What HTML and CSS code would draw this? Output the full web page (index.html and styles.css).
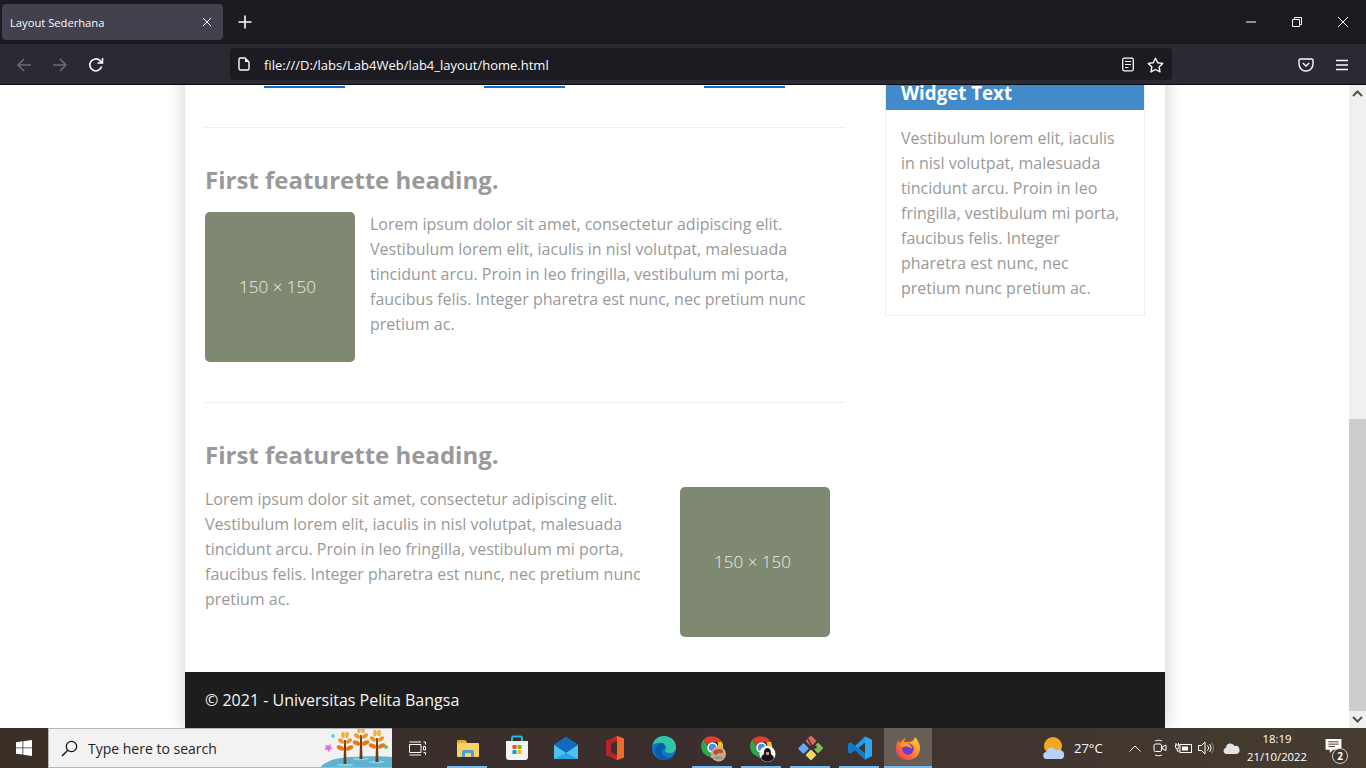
FILE: index.html
```html
<!DOCTYPE html>
<html lang="en-US">

<head>
    <meta charset="utf-8">
    <title>Layout Sederhana</title>
    <link rel="stylesheet" href="styles.css">
</head>

<body>
    <!-- Browser tabs -->
    <header class="tabbar">
        <div class="tab">
            <span class="tab-title">Layout Sederhana</span>
            <svg class="tab-close" width="10" height="10" viewBox="0 0 10 10"><path d="M1 1l8 8M9 1l-8 8" stroke="#fbfbfe" stroke-width="1"/></svg>
        </div>
        <svg class="tab-new" width="14" height="14" viewBox="0 0 14 14"><path d="M7 .5v13M.5 7h13" stroke="#fbfbfe" stroke-width="1.6"/></svg>
        <div class="win-buttons">
            <svg width="46" height="12" viewBox="0 0 46 12"><path d="M18 6h10" stroke="#fff" stroke-width="1"/></svg>
            <svg width="46" height="12" viewBox="0 0 46 12"><path d="M18.5 3.500h7v7h-7zM20.500 3.500v-2h7v7h-2" fill="none" stroke="#fff" stroke-width="1"/></svg>
            <svg width="46" height="12" viewBox="0 0 46 12"><path d="M18 1l10 10M28 1l-10 10" stroke="#fff" stroke-width="1"/></svg>
        </div>
    </header>

    <!-- Browser toolbar -->
    <nav class="toolbar">
        <svg class="nav-icon" width="16" height="16" viewBox="0 0 16 16"><path d="M15 8H2M8 2L2 8l6 6" fill="none" stroke="#6c6b73" stroke-width="1.5"/></svg>
        <svg class="nav-icon" width="16" height="16" viewBox="0 0 16 16"><path d="M1 8h13M8 2l6 6-6 6" fill="none" stroke="#6c6b73" stroke-width="1.5"/></svg>
        <svg class="nav-icon" width="16" height="16" viewBox="0 0 16 16"><path d="M13.600 9.500A6 6 0 1 1 12 3.600L14 5.600M14.500 1v5h-5" fill="none" stroke="#fbfbfe" stroke-width="1.6"/></svg>
        <div class="urlbar">
            <svg class="url-page" width="12" height="14" viewBox="0 0 12 14"><path d="M1 2.500A1.500 1.500 0 0 1 2.500 1H7l4 4v6.500A1.500 1.500 0 0 1 9.500 13h-7A1.500 1.500 0 0 1 1 11.500z" fill="none" stroke="#fbfbfe" stroke-width="1.4"/><path d="M7 1v4h4z" fill="#fbfbfe"/></svg>
            <span class="url-text">file:///D:/labs/Lab4Web/lab4_layout/home.html</span>
            <svg class="url-reader" width="14" height="15" viewBox="0 0 14 15"><rect x="1.700" y="1.200" width="10.600" height="12.600" rx="1.500" fill="none" stroke="#fbfbfe" stroke-width="1.300"/><path d="M4 4.500h6M4 7.500h6M4 10.500h3.500" stroke="#fbfbfe" stroke-width="1.200"/></svg>
            <svg class="url-star" width="17" height="16" viewBox="0 0 17 16"><path d="M8.500 1.200l2.200 4.500 5 .7-3.600 3.500.9 5-4.500-2.400-4.500 2.400.9-5L1.300 6.400l5-.7z" fill="none" stroke="#fbfbfe" stroke-width="1.400" stroke-linejoin="round"/></svg>
        </div>
        <svg class="pocket" width="16" height="14" viewBox="0 0 16 14"><path d="M1 2.500A1.500 1.500 0 0 1 2.500 1h11A1.500 1.500 0 0 1 15 2.500V6a7 7 0 0 1-14 0z" fill="none" stroke="#fbfbfe" stroke-width="1.400"/><path d="M4.800 5L8 8l3.200-3" fill="none" stroke="#fbfbfe" stroke-width="1.400"/></svg>
        <svg class="menu" width="14" height="12" viewBox="0 0 14 12"><path d="M1 1.500h12M1 6h12M1 10.500h12" stroke="#fbfbfe" stroke-width="1.300"/></svg>
    </nav>

    <div class="viewport">
        <div class="pagearea">
            <div class="page">
                <div class="content">
                    <main class="main">
                        <div class="links">
                            <div class="link-col"><a href="#" aria-label="Read More"></a></div>
                            <div class="link-col"><a href="#" aria-label="Read More"></a></div>
                            <div class="link-col"><a href="#" aria-label="Read More"></a></div>
                        </div>
                        <hr class="divider first">
                        <article class="featurette">
                            <h2>First featurette heading.</h2>
                            <div class="feature-row">
                                <div class="thumb">150 × 150</div>
                                <p class="feature-text left">Lorem ipsum dolor sit amet, consectetur adipiscing elit. Vestibulum lorem elit, iaculis in nisl volutpat, malesuada tincidunt arcu. Proin in leo fringilla, vestibulum mi porta, faucibus felis. Integer pharetra est nunc, nec pretium nunc pretium ac.</p>
                            </div>
                        </article>
                        <hr class="divider">
                        <article class="featurette last">
                            <h2>First featurette heading.</h2>
                            <div class="feature-row">
                                <p class="feature-text right">Lorem ipsum dolor sit amet, consectetur adipiscing elit. Vestibulum lorem elit, iaculis in nisl volutpat, malesuada tincidunt arcu. Proin in leo fringilla, vestibulum mi porta, faucibus felis. Integer pharetra est nunc, nec pretium nunc pretium ac.</p>
                                <div class="thumb">150 × 150</div>
                            </div>
                        </article>
                    </main>
                    <aside class="widget">
                        <h3>Widget Text</h3>
                        <p>Vestibulum lorem elit, iaculis in nisl volutpat, malesuada tincidunt arcu. Proin in leo fringilla, vestibulum mi porta, faucibus felis. Integer pharetra est nunc, nec pretium nunc pretium ac.</p>
                    </aside>
                </div>
                <footer class="footer">© 2021 - Universitas Pelita Bangsa</footer>
            </div>
        </div>
        <div class="scrollbar">
            <div class="scroll-btn"><svg width="11" height="7" viewBox="0 0 11 7"><path d="M1 6l4.500-4.500L10 6" fill="none" stroke="#505050" stroke-width="2"/></svg></div>
            <div class="scroll-track"><div class="scroll-thumb"></div></div>
            <div class="scroll-btn"><svg width="11" height="7" viewBox="0 0 11 7"><path d="M1 1l4.500 4.500L10 1" fill="none" stroke="#505050" stroke-width="2"/></svg></div>
        </div>
    </div>

    <!-- Windows taskbar -->
    <div class="taskbar">
        <div class="start">
            <svg width="16" height="16" viewBox="0 0 16 16"><path d="M0 2.200l6.500-.9v6.200H0zM7.300 1.200L16 0v7.500H7.300zM0 8.300h6.500v6.300L0 13.800zM7.300 8.300H16V16l-8.700-1.200z" fill="#fff"/></svg>
        </div>
        <div class="search">
            <svg width="17" height="17" viewBox="0 0 17 17"><circle cx="10.500" cy="6.500" r="5.200" fill="none" stroke="#111" stroke-width="1.200"/><path d="M6.800 10.300L1 16" stroke="#111" stroke-width="1.400"/></svg>
            <span class="search-text">Type here to search</span>
            <svg class="search-art" width="79" height="40" viewBox="0 0 79 40">
                <defs>
                    <g id="tree">
                        <path d="M-1.500 32L-.8 8h1.600l.7 24z" fill="#70371b"/>
                        <ellipse cx="-4.500" cy="16" rx="4" ry="2.200" transform="rotate(25 -4.500 16)" fill="#e8780f"/>
                        <ellipse cx="4.500" cy="16" rx="4" ry="2.200" transform="rotate(-25 4.500 16)" fill="#e67a10"/>
                        <ellipse cx="-4" cy="9" rx="3.500" ry="2" transform="rotate(40 -4 9)" fill="#f09a26"/>
                        <ellipse cx="4" cy="9" rx="3.500" ry="2" transform="rotate(-40 4 9)" fill="#ef9722"/>
                        <ellipse cx="-2" cy="3" rx="1.800" ry="3.200" fill="#f3b044"/>
                        <ellipse cx="2" cy="3" rx="1.800" ry="3.200" fill="#f3b044"/>
                    </g>
                </defs>
                <path d="M7 40c4-6 14-10 30-11s33-1 42 0v11z" fill="#5fb3d0"/>
                <ellipse cx="32" cy="37" rx="9" ry="1.500" fill="#86cfe0"/>
                <ellipse cx="48" cy="31" rx="8" ry="1.300" fill="#86cfe0"/>
                <ellipse cx="64" cy="34" rx="8" ry="1.300" fill="#86cfe0"/>
                <circle cx="20" cy="8" r="2" fill="#62d6ee"/>
                <path d="M12 17l3.500.8L18 16l-.6 3 2.600 1.500-2.900.7-1 3-1.700-2.500-3 .4 1.600-2.500z" fill="#e66be0"/>
                <circle cx="73" cy="19" r="2" fill="#3bd17c"/>
                <use href="#tree" x="48" y="-1"/>
                <use href="#tree" x="64" y="2"/>
                <use href="#tree" x="32" y="4"/>
            </svg>
        </div>
        <div class="taskview">
            <svg width="17" height="15" viewBox="0 0 17 15"><path d="M.5 3.500h11.500v8H.5zM.5 1h11.500M.5 14h11.500M14.500 1h2v2.500M14.500 5.500h2v3.500h-2zM14.500 11.500h2V14" fill="none" stroke="#fff" stroke-width="1"/></svg>
        </div>

        <div class="app open">
            <svg width="24" height="20" viewBox="0 0 24 20"><path d="M1 3a1 1 0 0 1 1-1h7l2 2v3H1z" fill="#e9a52d"/><path d="M1 5h21a1 1 0 0 1 1 1v12a1 1 0 0 1-1 1H2a1 1 0 0 1-1-1z" fill="#fad163"/><path d="M6 14a2 2 0 0 1 2-2h8a2 2 0 0 1 2 2v5h-3v-4H9v4H6z" fill="#4d9fdb"/></svg>
        </div>
        <div class="app">
            <svg width="24" height="26" viewBox="0 0 24 26"><path d="M7 6V3a1.500 1.500 0 0 1 1.500-1.500h7A1.500 1.500 0 0 1 17 3v3" fill="none" stroke="#2fb4e0" stroke-width="2"/><path d="M1 6h22v16a3 3 0 0 1-3 3H4a3 3 0 0 1-3-3z" fill="#f3f3f3"/><path d="M7.500 10h4v4h-4z" fill="#f25022"/><path d="M12.500 10h4v4h-4z" fill="#7fba00"/><path d="M7.500 15h4v4h-4z" fill="#00a4ef"/><path d="M12.500 15h4v4h-4z" fill="#ffb900"/></svg>
        </div>
        <div class="app">
            <svg width="24" height="22" viewBox="0 0 24 22"><path d="M0 8L12 0l12 8v14H0z" fill="#28a8ea"/><path d="M0 8l12 8 12-8-12-8z" fill="#0f6cbd"/><path d="M0 8l12 8 12-8v14H0z" fill="#50c0ef"/><path d="M0 22l12-6 12 6z" fill="#2ba4e6"/></svg>
        </div>
        <div class="app">
            <svg width="20" height="24" viewBox="0 0 20 24"><path d="M1 5l11-5 7 2.500v19L12 24 1 19z" fill="#d83b01"/><path d="M12 0l7 2.500v19L12 24z" fill="#eb6c2c"/><path d="M1 5l11-5v5L6 7.500v9l6 2.500v5L1 19z" fill="#b7242a"/><path d="M6 7.500L12 5v14l-6-2.500z" fill="#3b3028"/></svg>
        </div>
        <div class="app">
            <svg width="26" height="26" viewBox="0 0 26 26"><circle cx="13" cy="13" r="12" fill="#1178c9"/><path d="M1.500 10C3 4 8 1 13 1c7 0 12 5 12 11 0 4-3 6-6 6-3 0-5-1-5-3 1-1 2-2 1-4-2-3-6-4-9-3-2 .5-4 1.500-5 2z" fill="#2fc7a7"/><path d="M12 8c-5 0-8 4-8 8 0 5 5 9 10 9 3 0 6-1 8-3-3 1-8 1-10-2-2-3-1-6 2-8-1-2-1-3-2-4z" fill="#0b5ba8"/></svg>
        </div>
        <div class="app open">
            <svg width="30" height="30" viewBox="-2.500 -.5 30 30"><path d="M12 3a11 11 0 0 1 9.500 5.500H12a5.500 5.500 0 0 0-5 3.200L3 5.800A11 11 0 0 1 12 3z" fill="#e33b2e"/><path d="M3 5.800l5 8.700a5.500 5.500 0 0 0 5 3l-3.500 6A11 11 0 0 1 3 5.800z" fill="#2ea64a"/><path d="M21.500 8.500a11 11 0 0 1-12 15.500l4.500-7.500a5.500 5.500 0 0 0 3-8z" fill="#fbc02d"/><circle cx="12" cy="14" r="4.500" fill="#4a90e8" stroke="#fff" stroke-width="1.500"/><circle cx="18" cy="20.500" r="7.500" fill="#d9a48c"/><path d="M13 17.500c2-2 6-3 9-1 1 2 0 4-1 3-2 1-3-1-4 1-1 2-3 1-4-1z" fill="#b4552f"/><path d="M13 24c2 2 7 3 10 0-2-1-7-2-10 0z" fill="#7f9ca8"/></svg>
        </div>
        <div class="app open">
            <svg width="30" height="30" viewBox="-2.500 -.5 30 30"><path d="M12 3a11 11 0 0 1 9.500 5.500H12a5.500 5.500 0 0 0-5 3.200L3 5.800A11 11 0 0 1 12 3z" fill="#e33b2e"/><path d="M3 5.800l5 8.700a5.500 5.500 0 0 0 5 3l-3.500 6A11 11 0 0 1 3 5.800z" fill="#2ea64a"/><path d="M21.500 8.500a11 11 0 0 1-12 15.500l4.500-7.500a5.500 5.500 0 0 0 3-8z" fill="#fbc02d"/><circle cx="12" cy="14" r="4.500" fill="#4a90e8" stroke="#fff" stroke-width="1.500"/><circle cx="18" cy="20.500" r="8" fill="#fff"/><path d="M11.500 24.500c1-3 2-3 3-4 0-2 0-6 3.500-6s3.500 4 3.500 6c1 1 2 1 3 4a7.500 7.500 0 0 1-13 0z" fill="#15131c"/><path d="M16.500 18.500h3v3h-3z" fill="#c79178"/></svg>
        </div>
        <div class="app open">
            <svg width="26" height="26" viewBox="0 0 26 26"><rect x="1.500" y="9.500" width="8" height="8" rx="1.500" transform="rotate(45 5.500 13.500)" fill="#6aa8f0"/><rect x="16" y="9" width="8" height="8" rx="1.500" transform="rotate(45 20 13)" fill="#7dbb58"/><rect x="9" y="16" width="8" height="8" rx="1.500" transform="rotate(45 13 20)" fill="#f2d86a"/><rect x="9" y="2" width="8" height="8" rx="1.500" transform="rotate(45 13 6)" fill="#e0646a"/><path d="M10 4l7 13" stroke="#3a2e28" stroke-width="1.500"/><circle cx="17" cy="12" r="1.800" fill="#3a2e28"/></svg>
        </div>
        <div class="app open">
            <svg width="24" height="24" viewBox="0 0 24 24"><path d="M17 .5L24 4v16l-7 3.500L7 14l-4.500 3.500L0 16v-8l2.500-1.500L7 10zM17 6.500L10.500 12l6.500 5.500z" fill="#1f9cf0"/><path d="M17 .5L24 4v16l-7 3.500z" fill="#2ba6f3"/><path d="M0 8l2.500-1.500L17 17.500v6L7 14l-4.500 3.500L0 16z" fill="#0e7ac4"/></svg>
        </div>
        <div class="app open current">
            <svg width="24" height="24" viewBox="0 0 24 24">
                <defs>
                    <linearGradient id="foxRing" x1="1" y1="0" x2="0" y2="1"><stop offset="0" stop-color="#ffd43a"/><stop offset=".45" stop-color="#ff8a2b"/><stop offset="1" stop-color="#f1295f"/></linearGradient>
                </defs>
                <path d="M19 1c3 3 5 7 5 11 0 7-5 12-12 12S0 19 0 13c0-4 1-7 3-9 0 1 0 2 1 3 1-2 3-4 6-5-1 1-2 3-2 4h4c4 0 6-2 7-5z" fill="url(#foxRing)"/>
                <circle cx="12" cy="13" r="5.800" fill="#6f3bd1"/>
                <path d="M4 9c2-2 6-3 9-1 2 1 3 3 3 5-2-2-5-3-8-2-2 .5-3 0-4-2z" fill="#ff9a2e"/>
            </svg>
        </div>

        <div class="tray">
            <svg class="weather" width="24" height="24" viewBox="0 0 24 24"><circle cx="11" cy="10" r="9" fill="#f5a623"/><path d="M5 23a3.500 3.500 0 0 1-.5-7 5 5 0 0 1 9.500-1.500 4.500 4.500 0 0 1 6 8.500z" fill="#b6d4f5"/></svg>
            <span class="temp">27°C</span>
            <svg class="chevron" width="12" height="7" viewBox="0 0 12 7"><path d="M.5 6.500L6 1l5.500 5.500" fill="none" stroke="#fff" stroke-width="1"/></svg>
            <svg class="meet" width="14" height="18" viewBox="0 0 14 18"><rect x="1" y="5" width="7.500" height="7.500" rx="1.500" fill="none" stroke="#fff"/><path d="M9 8l4-2v5.500L9 9.500zM2 2c2-1 5-1 7 0M2 16c2 1 5 1 7 0" fill="none" stroke="#fff"/></svg>
            <svg class="battery" width="17" height="12" viewBox="0 0 17 12"><rect x="5" y="2.500" width="11.500" height="8" fill="none" stroke="#fff"/><rect x="7" y="4.500" width="6" height="4" fill="#fff"/><path d="M1 1v2M3.500 1v2M.5 3h3.500v2a1.700 1.700 0 0 1-3.500 0zM2.200 7v2H5" fill="none" stroke="#fff"/></svg>
            <svg class="speaker" width="16" height="14" viewBox="0 0 16 14"><path d="M.5 4.500h3L7 1v12L3.500 9.500h-3zM9.500 4.500a3.500 3.500 0 0 1 0 5M11.500 3a6 6 0 0 1 0 8" fill="none" stroke="#fff"/><path d="M13.500 1.500a8.500 8.500 0 0 1 0 11" fill="none" stroke="#8a8278"/></svg>
            <svg class="cloud" width="17" height="11" viewBox="0 0 17 11"><path d="M3.500 11a3.200 3.200 0 0 1-.5-6.300A4.500 4.500 0 0 1 11.500 3a3.800 3.800 0 0 1 1.800 8z" fill="#e4e4e4"/></svg>
            <div class="clock"><span>18:19</span><span>21/10/2022</span></div>
            <div class="notify">
                <svg class="notify-icon" width="17" height="14" viewBox="0 0 17 15"><path d="M0 0h17v11.500H8L4.500 15v-3.500H0z" fill="#fff"/><path d="M3 3h11M3 5.500h11M3 8h7" stroke="#3f3429" stroke-width="1"/></svg>
                <span class="badge">2</span>
            </div>
        </div>
    </div>
</body>

</html>
```
FILE: styles.css
```css
html, body {
    margin: 0;
    height: 100%;
    overflow: hidden;
}

body {
    display: flex;
    flex-direction: column;
    height: 768px;
    font-family: "Open Sans", sans-serif;
    background: #fff;
}

/* Browser chrome */
.tabbar {
    display: flex;
    align-items: center;
    height: 44px;
    flex: none;
    background: #1c1b22;
    color: #fbfbfe;
}

.tab {
    display: flex;
    align-items: center;
    justify-content: space-between;
    box-sizing: border-box;
    width: 221px;
    height: 36px;
    margin-left: 2px;
    padding: 0 11px 0 8px;
    background: #42414d;
    border-radius: 4px;
    font-size: 11.2px;
}

.tab-new {
    margin-left: 15px;
}

.win-buttons {
    display: flex;
    margin-left: auto;
}

.toolbar {
    display: flex;
    align-items: center;
    box-sizing: border-box;
    height: 41px;
    flex: none;
    padding-left: 16px;
    background: #2b2a33;
    border-bottom: 1px solid #0c0c0d;
}

.nav-icon {
    margin: 2px 20px 0 0;
}

.urlbar {
    display: flex;
    align-items: center;
    box-sizing: border-box;
    width: 942px;
    height: 32px;
    margin-left: 106px;
    padding: 0 8px;
    background: #1c1b22;
    border-radius: 4px;
    color: #fbfbfe;
    font-size: 13px;
}

.url-page {
    margin-right: 14px;
}

.url-text {
    flex: 1;
    padding-top: 1px;
}

.url-reader {
    margin: 1px 12px 0 0;
}

.url-star {
    margin-top: 1px;
}

.pocket {
    margin: 1px 0 0 126px;
}

.menu {
    margin: 1px 0 0 21px;
}

/* Page */
.viewport {
    display: flex;
    flex: 1;
    min-height: 0;
}

.pagearea {
    flex: 1;
    overflow: hidden;
}

.page {
    width: 980px;
    margin: -22px 0 0 185px;
    background: #fff;
    box-shadow: 0 0 18px rgba(0, 0, 0, 0.2);
}

.content {
    display: flex;
    align-items: flex-start;
    gap: 40px;
    padding: 0 20px;
}

.main {
    width: 640px;
}

.links {
    display: flex;
    gap: 21px;
}

.link-col {
    width: 199px;
    text-align: center;
}

.link-col a {
    display: inline-block;
    box-sizing: border-box;
    width: 81px;
    height: 25px;
    border-bottom: 2px solid #0a6ed6;
    vertical-align: top;
}

.divider {
    height: 1px;
    margin: 0 0 30px;
    border: 0;
    background: #eee;
}

.divider.first {
    margin-top: 39px;
}

.featurette {
    margin-bottom: 40px;
}

.featurette.last {
    margin-bottom: 35px;
}

.featurette h2 {
    margin: 0 0 10px;
    color: #999;
    font-size: 24px;
    font-weight: 700;
    line-height: 44px;
}

.feature-row {
    display: flex;
    gap: 15px;
}

.thumb {
    display: flex;
    align-items: center;
    justify-content: center;
    box-sizing: border-box;
    flex: none;
    width: 150px;
    height: 150px;
    padding: 0 5px 2px 0;
    border-radius: 5px;
    background: #7f8870;
    color: #eceee8;
    font-size: 17px;
    font-weight: 300;
}

.feature-text {
    margin: 0;
    color: #999;
    font-size: 16px;
    line-height: 25px;
}

.feature-text.left {
    width: 475px;
}

.feature-text.right {
    width: 460px;
}

.widget {
    box-sizing: border-box;
    width: 260px;
    border: 1px solid #eee;
    border-top: 0;
}

.widget h3 {
    margin: 0;
    padding: 23px 15px 10px;
    background: #428bca;
    color: #fff;
    font-size: 18.72px;
    font-weight: 700;
    line-height: 14px;
}

.widget p {
    margin: 0;
    padding: 16px 15px 14px;
    color: #999;
    font-size: 16px;
    line-height: 25px;
}

.footer {
    display: flex;
    align-items: center;
    height: 56px;
    padding: 0 20px;
    background: #1d1d1d;
    color: #f5f5f5;
    font-size: 16px;
}

/* Scrollbar */
.scrollbar {
    display: flex;
    flex-direction: column;
    flex: none;
    width: 17px;
    background: #f0f0f0;
}

.scroll-btn {
    display: flex;
    align-items: center;
    justify-content: center;
    flex: none;
    height: 17px;
}

.scroll-track {
    display: flex;
    flex-direction: column;
    justify-content: flex-end;
    flex: 1;
}

.scroll-thumb {
    height: 292px;
    background: #cdcdcd;
}

/* Taskbar */
.taskbar {
    display: flex;
    align-items: center;
    flex: none;
    height: 40px;
    background: linear-gradient(90deg, #3b2f27 0%, #3a2f2e 50%, #473c30 100%);
}

.start {
    display: flex;
    align-items: center;
    justify-content: center;
    flex: none;
    width: 48px;
    height: 40px;
}

.search {
    display: flex;
    align-items: center;
    position: relative;
    overflow: hidden;
    box-sizing: border-box;
    flex: none;
    width: 344px;
    height: 40px;
    padding-left: 12px;
    background: #f2f2f2;
    border: 1px solid #b4b4b4;
    border-width: 1px 0 1px 1px;
}

.search-text {
    margin-left: 10px;
    color: #1f1f1f;
    font-size: 14px;
}

.search-art {
    position: absolute;
    right: 0;
    top: -1px;
}

.taskview {
    display: flex;
    align-items: center;
    justify-content: center;
    flex: none;
    width: 51px;
    height: 40px;
}

.app {
    display: flex;
    align-items: center;
    justify-content: center;
    position: relative;
    flex: none;
    width: 49px;
    height: 40px;
}

.app.open::after {
    content: "";
    position: absolute;
    left: 4px;
    right: 5px;
    bottom: 0;
    height: 2px;
    background: #76b9ed;
}

.app.current {
    width: 48px;
    background: #675e55;
}

.app.current::after {
    left: 0;
    right: 0;
}

.tray {
    display: flex;
    align-items: center;
    margin-left: auto;
    height: 40px;
    color: #fff;
    font-size: 11.3px;
}

.temp {
    width: 32px;
    margin-left: 8px;
    font-size: 13px;
}

.chevron {
    margin-left: 23px;
}

.meet {
    margin-left: 12px;
}

.battery {
    margin-left: 7.5px;
}

.speaker {
    margin-left: 6.5px;
}

.cloud {
    margin-left: 8.5px;
}

.clock {
    display: flex;
    flex-direction: column;
    align-items: center;
    width: 62px;
    margin-left: 6.5px;
    line-height: 18px;
}

.notify {
    position: relative;
    display: flex;
    align-items: center;
    justify-content: center;
    width: 58px;
    height: 40px;
}

.notify-icon {
    margin: 0 7px 4px 0;
}

.badge {
    position: absolute;
    left: 24px;
    top: 20px;
    box-sizing: border-box;
    width: 16px;
    height: 16px;
    border: 1px solid #cfcfcf;
    border-radius: 50%;
    background: #3f3429;
    font-size: 10px;
    font-weight: 700;
    line-height: 14px;
    text-align: center;
}
```
